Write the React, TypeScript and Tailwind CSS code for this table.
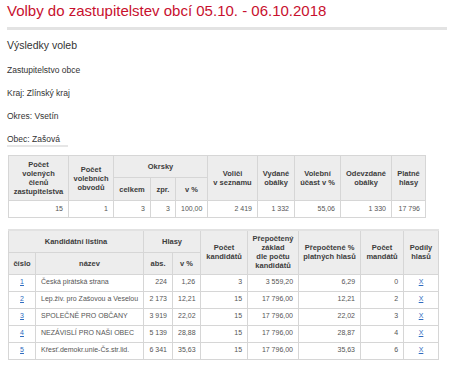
const th =
  "border border-[#d6d6d6] bg-[#ededed] font-bold text-[#3c3c3c] text-center align-middle text-[7.5px] leading-[9px] px-[2px] p-0";
const td = "border border-[#d6d6d6] bg-white text-[7px] text-[#555] px-[5px] p-0 align-middle";

const summary = ["15", "1", "3", "3", "100,00", "2 419", "1 332", "55,06", "1 330", "17 796"];

const parties = [
  { n: "1", name: "Česká pirátská strana", abs: "224", pct: "1,26", kand: "3", base: "3 559,20", rpct: "6,29", mand: "0" },
  { n: "2", name: "Lep.živ. pro Zašovou a Veselou", abs: "2 173", pct: "12,21", kand: "15", base: "17 796,00", rpct: "12,21", mand: "2" },
  { n: "3", name: "SPOLEČNĚ PRO OBČANY", abs: "3 919", pct: "22,02", kand: "15", base: "17 796,00", rpct: "22,02", mand: "3" },
  { n: "4", name: "NEZÁVISLÍ PRO NAŠI OBEC", abs: "5 139", pct: "28,88", kand: "15", base: "17 796,00", rpct: "28,87", mand: "4" },
  { n: "5", name: "Křesť.demokr.unie-Čs.str.lid.", abs: "6 341", pct: "35,63", kand: "15", base: "17 796,00", rpct: "35,63", mand: "6" },
];

function SummaryTable() {
  return (
    <table className="table-fixed border-collapse w-[418px]">
      <colgroup>
        <col className="w-[60px]" />
        <col className="w-[45px]" />
        <col className="w-[37px]" />
        <col className="w-[25px]" />
        <col className="w-[32px]" />
        <col className="w-[50px]" />
        <col className="w-[37px]" />
        <col className="w-[46px]" />
        <col className="w-[51px]" />
        <col className="w-[34px]" />
      </colgroup>
      <thead>
        <tr className="h-[22px]">
          <th rowSpan={2} className={th}>Počet<br />volených<br />členů<br />zastupitelstva</th>
          <th rowSpan={2} className={th}>Počet<br />volebních<br />obvodů</th>
          <th colSpan={3} className={th}>Okrsky</th>
          <th rowSpan={2} className={th}>Voliči<br />v seznamu</th>
          <th rowSpan={2} className={th}>Vydané<br />obálky</th>
          <th rowSpan={2} className={th}>Volební<br />účast v %</th>
          <th rowSpan={2} className={th}>Odevzdané<br />obálky</th>
          <th rowSpan={2} className={th}>Platné<br />hlasy</th>
        </tr>
        <tr className="h-[23px]">
          <th className={th}>celkem</th>
          <th className={th}>zpr.</th>
          <th className={th}>v %</th>
        </tr>
      </thead>
      <tbody>
        <tr className="h-[17px]">
          {summary.map((v, i) => (
            <td key={i} className={`${td} text-right`}>{v}</td>
          ))}
        </tr>
      </tbody>
    </table>
  );
}

function PartyTable() {
  return (
    <table className="table-fixed border-collapse w-[430px] border-t-2 border-t-[#e2e2e2]">
      <colgroup>
        <col className="w-[27px]" />
        <col className="w-[108px]" />
        <col className="w-[29px]" />
        <col className="w-[28px]" />
        <col className="w-[47px]" />
        <col className="w-[51px]" />
        <col className="w-[62px]" />
        <col className="w-[43px]" />
        <col className="w-[35px]" />
      </colgroup>
      <thead>
        <tr className="h-[22px]">
          <th colSpan={2} className={th}>Kandidátní listina</th>
          <th colSpan={2} className={th}>Hlasy</th>
          <th rowSpan={2} className={th}>Počet<br />kandidátů</th>
          <th rowSpan={2} className={th}>Přepočtený<br />základ<br />dle počtu<br />kandidátů</th>
          <th rowSpan={2} className={th}>Přepočtené %<br />platných hlasů</th>
          <th rowSpan={2} className={th}>Počet<br />mandátů</th>
          <th rowSpan={2} className={th}>Podíly<br />hlasů</th>
        </tr>
        <tr className="h-[22px]">
          <th className={th}>číslo</th>
          <th className={th}>název</th>
          <th className={th}>abs.</th>
          <th className={th}>v %</th>
        </tr>
      </thead>
      <tbody>
        {parties.map((p) => (
          <tr key={p.n} className="h-[17px]">
            <td className={`${td} text-center`}>
              <a className="text-[#2e6cc0] underline">{p.n}</a>
            </td>
            <td className={`${td} text-left whitespace-nowrap`}>{p.name}</td>
            <td className={`${td} text-right`}>{p.abs}</td>
            <td className={`${td} text-right`}>{p.pct}</td>
            <td className={`${td} text-right`}>{p.kand}</td>
            <td className={`${td} text-right`}>{p.base}</td>
            <td className={`${td} text-right`}>{p.rpct}</td>
            <td className={`${td} text-right`}>{p.mand}</td>
            <td className={`${td} text-center`}>
              <a className="text-[#2e6cc0] underline">X</a>
            </td>
          </tr>
        ))}
      </tbody>
    </table>
  );
}

export default function App() {
  return (
    <div className="min-h-[387px] w-[460px] bg-white pl-[7px] pt-[2px] font-['Liberation_Sans',Arial,sans-serif]">
      <h1 className="text-[15px] leading-[18px] text-[#c8102e]">
        Volby do zastupitelstev obcí 05.10. - 06.10.2018
      </h1>
      <div className="mt-[7px] h-[3px] w-[440px] bg-[#e3e3e3]" />
      <h2 className="mt-[9px] text-[10.5px] leading-[13px] text-[#333]">Výsledky voleb</h2>
      <div className="mt-[14px] flex flex-col gap-[14px] text-[8.5px] leading-[9px] text-[#333]">
        <p>Zastupitelstvo obce</p>
        <p>Kraj: Zlínský kraj</p>
        <p>Okres: Vsetín</p>
        <p>Obec: Zašová</p>
      </div>
      <div className="mt-[1px] h-[2px] w-[61px] bg-[#e6e6e6]" />
      <div className="mt-[8px] ml-[1px]">
        <SummaryTable />
      </div>
      <div className="mt-[11px] ml-[1px]">
        <PartyTable />
      </div>
    </div>
  );
}
